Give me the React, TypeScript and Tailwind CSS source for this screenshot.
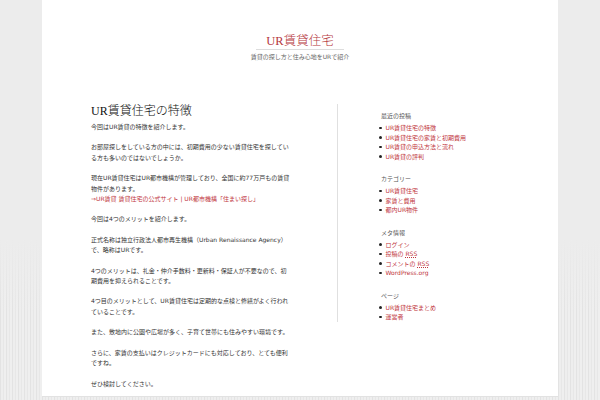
import React from 'react';

const sans = "font-['DejaVu_Sans','Noto_Sans_CJK_JP',sans-serif]";
const serif = "font-['Liberation_Serif','Noto_Sans_CJK_JP',serif]";

const widgets: { title: string; items: React.ReactNode[] }[] = [
  {
    title: '最近の投稿',
    items: ['UR賃貸住宅の特徴', 'UR賃貸住宅の家賃と初期費用', 'UR賃貸の申込方法と流れ', 'UR賃貸の評判'],
  },
  {
    title: 'カテゴリー',
    items: ['UR賃貸住宅', '家賃と費用', '都内UR物件'],
  },
  {
    title: 'メタ情報',
    items: [
      'ログイン',
      <>投稿の <abbr className="underline decoration-dotted">RSS</abbr></>,
      <>コメントの <abbr className="underline decoration-dotted">RSS</abbr></>,
      'WordPress.org',
    ],
  },
  {
    title: 'ページ',
    items: ['UR賃貸住宅まとめ', '運営者'],
  },
];

const paragraphs: React.ReactNode[] = [
  '今回はUR賃貸の特徴を紹介します。',
  'お部屋探しをしている方の中には、初期費用の少ない賃貸住宅を探している方も多いのではないでしょうか。',
  <>
    現在UR賃貸住宅はUR都市機構が管理しており、全国に約77万戸もの賃貸物件があります。
    <br />
    <a className="text-[#c0343c]">⇒UR賃貸 賃貸住宅の公式サイト | UR都市機構「住まい探し」</a>
  </>,
  '今回は4つのメリットを紹介します。',
  '正式名称は独立行政法人都市再生機構（Urban Renaissance Agency）で、略称はURです。',
  '4つのメリットは、礼金・仲介手数料・更新料・保証人が不要なので、初期費用を抑えられることです。',
  '4つ目のメリットとして、UR賃貸住宅は定期的な点検と修繕がよく行われていることです。',
  'また、敷地内に公園や広場が多く、子育て世帯にも住みやすい環境です。',
  'さらに、家賃の支払いはクレジットカードにも対応しており、とても便利ですね。',
  'ぜひ検討してください。',
];

export default function App() {
  return (
    <div className="h-screen overflow-hidden [background:linear-gradient(#ececec_0%,rgba(236,236,236,0)_45%)_bottom/100%_160px_no-repeat,repeating-linear-gradient(90deg,#e3e3e3_0_1px,#eeeeee_1px_3px,#e7e7e7_3px_4px,#efefef_4px_6px)_bottom/100%_160px_no-repeat,#ececec]">
      <div className={`mx-auto w-[516px] bg-white border-b border-[#e2e2e2] pb-[7px] ${sans}`}>
        {/* header */}
        <header className="flex flex-col items-center pt-[33px]">
          <h1 className={`px-[10px] border-b border-[#dddddd] text-[12.5px] leading-[16px] font-light text-[#b5373d] ${serif}`}>
            UR賃貸住宅
          </h1>
          <p className="mt-[2px] text-[6px] leading-[10px] text-[#666]">賃貸の探し方と住み心地をURで紹介</p>
        </header>

        <div className="mt-[42px] flex pl-[49px]">
          {/* main */}
          <main className="w-[200px] mr-[46px] shrink-0">
            <h2 className={`mb-[3px] text-[12px] leading-[15px] font-light text-[#111] ${serif}`}>UR賃貸住宅の特徴</h2>
            {paragraphs.map((p, i) => (
              <p key={i} className={`text-[6px] leading-[10.4px] text-[#333] ${i === paragraphs.length - 1 ? '' : 'mb-[10px]'}`}>
                {p}
              </p>
            ))}
          </main>

          {/* sidebar */}
          <aside className="self-start w-[150px] border-l border-[#e0e0e0] pl-[43px] pt-[7px]">
            {widgets.map((w, i) => (
              <section key={w.title} className={i === widgets.length - 1 ? '' : 'mb-[13px]'}>
                <h3 className="mb-[2px] text-[6px] leading-[10px] text-[#555]">{w.title}</h3>
                <ul>
                  {w.items.map((it, j) => (
                    <li key={j} className="flex items-center gap-[4px] -ml-[2px] text-[6px] leading-[9.5px] text-[#c0343c]">
                      <span className="w-[2.5px] h-[2.5px] rounded-full bg-[#222] shrink-0" />
                      <a>{it}</a>
                    </li>
                  ))}
                </ul>
              </section>
            ))}
          </aside>
        </div>
      </div>
    </div>
  );
}
